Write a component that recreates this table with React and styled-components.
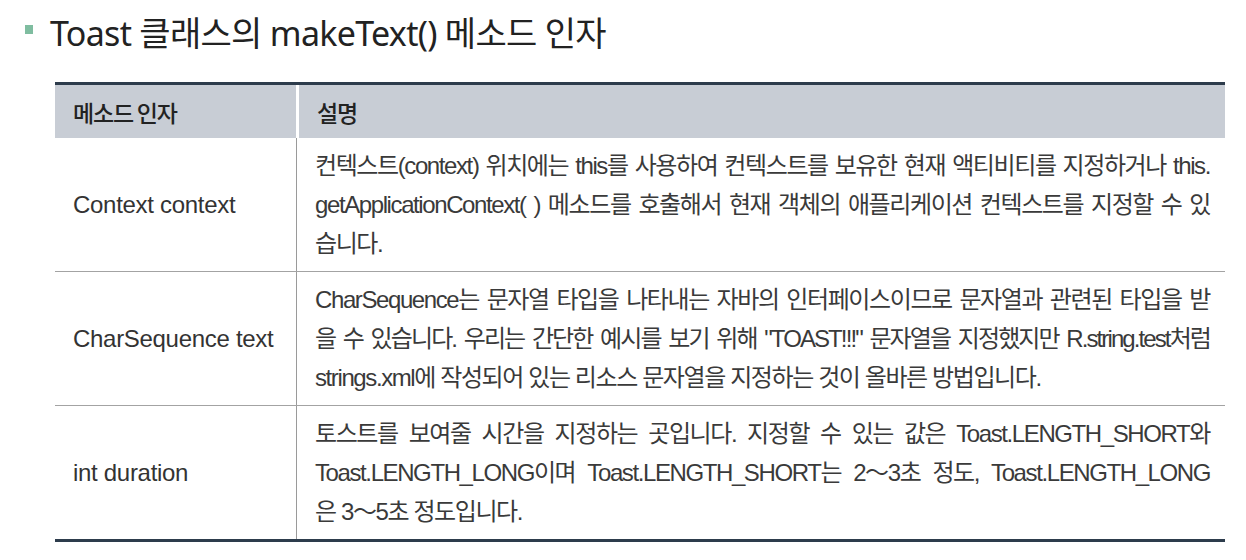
import React from "react";
import styled, { createGlobalStyle } from "styled-components";

const Global = createGlobalStyle`
  html, body { margin: 0; padding: 0; background: #ffffff; }
  body { font-family: "Liberation Sans", "Noto Sans CJK KR", sans-serif; }
`;

const Page = styled.div`
  width: 1246px;
  height: 560px;
  box-sizing: border-box;
  padding-top: 11px;
  display: flex;
  flex-direction: column;
`;

const TitleRow = styled.h2`
  margin: 0;
  padding-left: 25px;
  display: flex;
  align-items: center;
  gap: 17px;
  height: 40px;
  font-family: "Noto Sans", "Noto Sans CJK KR", sans-serif;
  font-weight: 400;
  font-size: 34px;
  letter-spacing: -0.7px;
  color: #222222;
`;

const Bullet = styled.span`
  width: 8px;
  height: 9px;
  margin-top: -4px;
  background: #7fbda0;
  flex: none;
`;

const Table = styled.div`
  margin: 31px 0 0 55px;
  width: 1170px;
  display: flex;
  flex-direction: column;
  border-top: 3px solid #2d3c4c;
  border-bottom: 3px solid #2d3c4c;
`;

const HeadRow = styled.div`
  display: grid;
  grid-template-columns: 241px 1fr;
  column-gap: 3px;
  height: 53px;
`;

const HeadCell = styled.div`
  background: #c8cdd5;
  display: flex;
  align-items: center;
  padding-left: 18px;
  font-family: "Noto Sans CJK KR", sans-serif;
  font-weight: 500;
  font-size: 23px;
  letter-spacing: -1.2px;
  color: #222222;
`;

const Row = styled.div`
  display: grid;
  grid-template-columns: 242px 1fr;
  border-top: ${(p) => (p.$first ? "none" : "1.5px solid #a3a3a3")};
`;

const NameCell = styled.div`
  display: flex;
  align-items: center;
  padding-left: 18px;
  border-right: 1px solid #9a9a9a;
  font-size: 24px;
  letter-spacing: -0.3px;
  color: #333333;
`;

const DescCell = styled.div`
  padding: 8px 15px 8px 18px;
  display: flex;
  flex-direction: column;
`;

const Line = styled.div`
  line-height: 39px;
  height: 39px;
  font-size: 24px;
  letter-spacing: ${(p) => (p.$tight ? "-1.9px" : "-1.4px")};
  color: #3a3a3a;
  text-align: justify;
  text-align-last: ${(p) => (p.$last ? "left" : "justify")};
`;

const Nobr = styled.span`
  display: inline-block;
  white-space: nowrap;
`;

const rows = [
  {
    name: "Context context",
    lines: [
      "컨텍스트(context) 위치에는 this를 사용하여 컨텍스트를 보유한 현재 액티비티를 지정하거나 this.",
      "getApplicationContext( ) 메소드를 호출해서 현재 객체의 애플리케이션 컨텍스트를 지정할 수 있",
      "습니다.",
    ],
  },
  {
    name: "CharSequence text",
    lines: [
      "CharSequence는 문자열 타입을 나타내는 자바의 인터페이스이므로 문자열과 관련된 타입을 받",
      "을 수 있습니다. 우리는 간단한 예시를 보기 위해 \"TOAST!!!\" 문자열을 지정했지만 R.string.test처럼",
      "strings.xml에 작성되어 있는 리소스 문자열을 지정하는 것이 올바른 방법입니다.",
    ],
    tight: 1,
  },
  {
    name: "int duration",
    lines: [
      "토스트를 보여줄 시간을 지정하는 곳입니다. 지정할 수 있는 값은 Toast.LENGTH_SHORT와",
      ["Toast.LENGTH_LONG이며 Toast.LENGTH_SHORT는 ", { nobr: "2～3초" }, " 정도, Toast.LENGTH_LONG"],
      "은 3～5초 정도입니다.",
    ],
  },
];

function renderLine(l) {
  if (typeof l === "string") return l;
  return l.map((part, k) =>
    typeof part === "string" ? part : <Nobr key={k}>{part.nobr}</Nobr>
  );
}

export default function App() {
  return (
    <>
      <Global />
      <Page>
        <TitleRow>
          <Bullet />
          <span>Toast 클래스의 makeText() 메소드 인자</span>
        </TitleRow>
        <Table>
          <HeadRow>
            <HeadCell>메소드 인자</HeadCell>
            <HeadCell>설명</HeadCell>
          </HeadRow>
          {rows.map((r, i) => (
            <Row key={r.name} $first={i === 0}>
              <NameCell>{r.name}</NameCell>
              <DescCell>
                {r.lines.map((l, j) => (
                  <Line
                    key={j}
                    $last={j === r.lines.length - 1}
                    $tight={r.tight === j}
                  >
                    {renderLine(l)}
                  </Line>
                ))}
              </DescCell>
            </Row>
          ))}
        </Table>
      </Page>
    </>
  );
}
